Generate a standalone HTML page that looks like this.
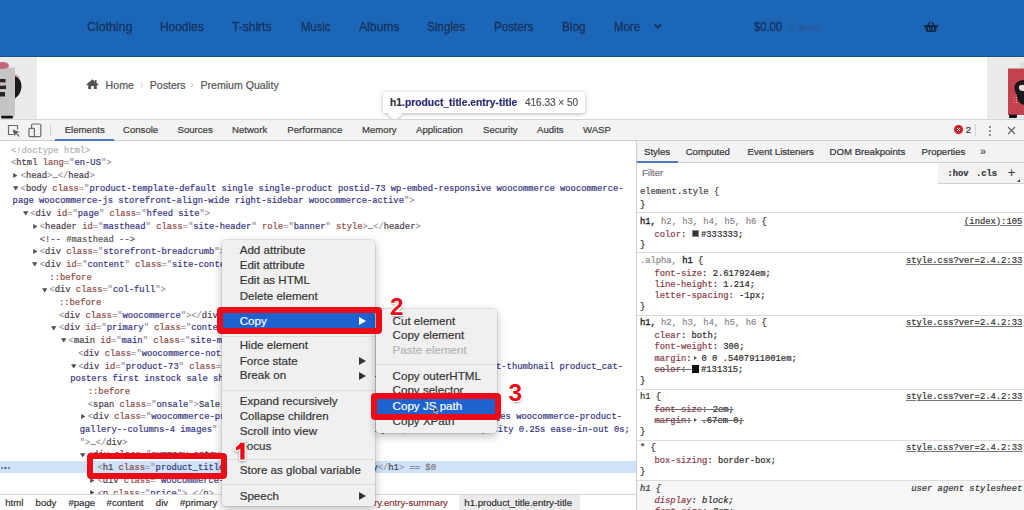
<!DOCTYPE html><html><head><meta charset="utf-8"><style>
*{margin:0;padding:0;box-sizing:border-box}
html,body{width:1024px;height:510px;overflow:hidden;background:#fff;position:relative}
body{font-family:"Liberation Sans",sans-serif}
.abs{position:absolute}
.t{position:absolute;white-space:pre;line-height:1;font-family:"Liberation Mono",monospace;-webkit-text-stroke:0.2px currentColor}
.b{color:#9e96a0}.n{color:#4a3b4c}.a{color:#8e4a44}.v{color:#363680}
.dt{color:#b4b4b4}.tx{color:#303942}.cm{color:#555}
.tri{position:absolute;width:0;height:0}
.tri.r{border-top:2.3px solid transparent;border-bottom:2.3px solid transparent;border-left:4.2px solid #4a4a4a}
.tri.d{border-left:2.5px solid transparent;border-right:2.5px solid transparent;border-top:4.2px solid #4a4a4a}

.pn{color:#8a3b48}.pv{color:#2a2a2a}.sg{color:#8a8a8a}.sd{color:#1a1a1a;-webkit-text-stroke:0.3px #1a1a1a}
.strike{text-decoration:line-through;text-decoration-color:#6a6a6a}
.menu{position:absolute;background:#f0f0f0;border-radius:4px;box-shadow:0 3px 10px rgba(0,0,0,.28),0 0 0 0.5px rgba(0,0,0,.15)}
.sep{position:absolute;height:1px;background:#dcdcdc}
.rbox{position:absolute;border:6px solid #ec0c18;border-radius:4px}
.num{position:absolute;font-family:"Liberation Sans",sans-serif;font-weight:bold;color:#e80c18;line-height:1;
 text-shadow:1px 1px 0 #fff,-1px -1px 0 #fff,1px -1px 0 #fff,-1px 1px 0 #fff,0 1px 0 #fff,0 -1px 0 #fff,1px 0 0 #fff,-1px 0 0 #fff,1px 2px 2px rgba(0,0,0,.35)}
</style></head><body>
<div class="abs" style="left:0;top:0;width:1024px;height:56px;background:#1b66b7"></div><div class="abs" style="left:0;top:56px;width:1024px;height:1px;background:#17508f"></div><div class="t" style="left:86.70px;top:19.99px;font-size:13px;transform:scaleX(0.9497);transform-origin:0 0;font-family:'Liberation Sans', sans-serif;color:#17325c;-webkit-text-stroke:0.35px #17325c;">Clothing</div><div class="t" style="left:160.10px;top:19.99px;font-size:13px;transform:scaleX(0.9162);transform-origin:0 0;font-family:'Liberation Sans', sans-serif;color:#17325c;-webkit-text-stroke:0.35px #17325c;">Hoodies</div><div class="t" style="left:232.40px;top:19.99px;font-size:13px;transform:scaleX(0.9246);transform-origin:0 0;font-family:'Liberation Sans', sans-serif;color:#17325c;-webkit-text-stroke:0.35px #17325c;">T-shirts</div><div class="t" style="left:300.50px;top:19.99px;font-size:13px;transform:scaleX(0.8631);transform-origin:0 0;font-family:'Liberation Sans', sans-serif;color:#17325c;-webkit-text-stroke:0.35px #17325c;">Music</div><div class="t" style="left:358.70px;top:19.99px;font-size:13px;transform:scaleX(0.9296);transform-origin:0 0;font-family:'Liberation Sans', sans-serif;color:#17325c;-webkit-text-stroke:0.35px #17325c;">Albums</div><div class="t" style="left:427.00px;top:19.99px;font-size:13px;transform:scaleX(0.8912);transform-origin:0 0;font-family:'Liberation Sans', sans-serif;color:#17325c;-webkit-text-stroke:0.35px #17325c;">Singles</div><div class="t" style="left:494.00px;top:19.99px;font-size:13px;transform:scaleX(0.8940);transform-origin:0 0;font-family:'Liberation Sans', sans-serif;color:#17325c;-webkit-text-stroke:0.35px #17325c;">Posters</div><div class="t" style="left:562.00px;top:19.99px;font-size:13px;transform:scaleX(0.9031);transform-origin:0 0;font-family:'Liberation Sans', sans-serif;color:#17325c;-webkit-text-stroke:0.35px #17325c;">Blog</div><div class="t" style="left:614.00px;top:19.99px;font-size:13px;transform:scaleX(0.8778);transform-origin:0 0;font-family:'Liberation Sans', sans-serif;color:#17325c;-webkit-text-stroke:0.35px #17325c;">More</div><div class="t" style="left:753.60px;top:19.99px;font-size:13px;transform:scaleX(0.8638);transform-origin:0 0;font-family:'Liberation Sans', sans-serif;color:#17325c;-webkit-text-stroke:0.35px #17325c;">$0.00</div><div class="t" style="left:789.00px;top:22.53px;font-size:10px;font-family:'Liberation Sans', sans-serif;color:#2a5a9a;">0 items</div><svg class="abs" style="left:653px;top:22.5px" width="10" height="6" viewBox="0 0 10 6"><path d="M1.6 1.6 L4.8 4.4 L8 1.6" stroke="#17325c" stroke-width="2" fill="none"/></svg><svg class="abs" style="left:923px;top:21px" width="16" height="12" viewBox="0 0 16 12"><path d="M5 4 L7 0.8 M11 4 L9 0.8" stroke="#12294a" stroke-width="1.4"/><path d="M1 4 H15 V6 H14 L12.5 11 H3.5 L2 6 H1 Z" fill="#12294a"/><path d="M5.5 6.5 V9.5 M8 6.5 V9.5 M10.5 6.5 V9.5" stroke="#1b66b7" stroke-width="1"/></svg><svg class="abs" style="left:0;top:57px" width="37" height="62" viewBox="0 57 37 62"><rect x="0" y="57" width="37" height="62" fill="#ebebeb"/><rect x="0" y="67.5" width="15" height="49" fill="#c6c4c4"/><ellipse cx="2.5" cy="65.5" rx="6.5" ry="3.6" fill="#c36a78"/><path d="M13.5 74.5 Q18 73.5 20 78 L15 79 Z" fill="#d8b4ba"/><path d="M15 76 Q22 79 21.5 87 Q20.5 95 15 98.5 Z" fill="#1c1a1b"/><path d="M0 79 H5.5 V82.5 H0 Z M0 85.5 H6 V89 H0 Z M0 92 H5 V96.5 H0 Z" fill="#262324"/><path d="M0 82.5 H4 V85.5 H0 Z" fill="#d5aeb5"/><rect x="1" y="115.8" width="12" height="2.8" rx="1.4" fill="#141414"/></svg><svg class="abs" style="left:987px;top:57px" width="37" height="62" viewBox="987 57 37 62"><rect x="987" y="57" width="37" height="62" fill="#ebebeb"/><rect x="1008" y="68.5" width="16" height="46.5" fill="#c2434f"/><path d="M1024 80 Q1016 80.5 1014.5 86 Q1014 92 1017 95 Q1017 103 1024 105 Z" fill="#1a1718"/><path d="M1019 86 Q1022 84 1024 85 V91 Q1020 91.5 1019 89 Z" fill="#e9dada"/><path d="M1013.5 97 h1 v1 h-1z M1016 97 h1 v1 h-1z M1013.5 99.5 h1 v1 h-1z M1016 99.5 h1 v1 h-1z M1013.5 102 h1 v1 h-1z M1016 102 h1 v1 h-1z" fill="#f0a0a8"/><rect x="1020" y="62" width="4" height="6" fill="#dcdcdc"/><rect x="1009" y="114.5" width="8" height="3.5" rx="1" fill="#161616"/></svg><svg class="abs" style="left:86px;top:79px" width="13" height="10" viewBox="0 0 13 10"><path d="M6.5 0.3 L0.3 5.6 L1.3 6.5 L2.2 5.8 V10 H5.2 V7 H7.8 V10 H10.8 V5.8 L11.7 6.5 L12.7 5.6 L10.5 3.7 V1 H9 V2.4 Z" fill="#555"/></svg><div class="t" style="left:105.60px;top:79.52px;font-size:10.6px;font-family:'Liberation Sans', sans-serif;color:#555;">Home</div><div class="t" style="left:149.70px;top:79.52px;font-size:10.6px;font-family:'Liberation Sans', sans-serif;color:#555;">Posters</div><div class="t" style="left:200.40px;top:79.52px;font-size:10.6px;font-family:'Liberation Sans', sans-serif;color:#555;">Premium Quality</div><svg class="abs" style="left:139.5px;top:82px" width="4" height="6" viewBox="0 0 4 6"><path d="M0.6 0.5 L3 3 L0.6 5.5" stroke="#c8c8c8" stroke-width="1" fill="none"/></svg><svg class="abs" style="left:190px;top:82px" width="4" height="6" viewBox="0 0 4 6"><path d="M0.6 0.5 L3 3 L0.6 5.5" stroke="#c8c8c8" stroke-width="1" fill="none"/></svg><div class="abs" style="left:383px;top:92px;width:202px;height:21px;background:#fff;border-radius:3px;box-shadow:0 1px 4px rgba(0,0,0,.3)"></div><div class="abs" style="left:390px;top:109px;width:10px;height:10px;background:#fff;transform:rotate(45deg);box-shadow:2px 2px 3px rgba(0,0,0,.15)"></div><div class="abs" style="left:383px;top:100px;width:30px;height:13px;background:#fff"></div><div class="t" style="left:389.60px;top:96.66px;font-size:10.8px;transform:scaleX(0.9563);transform-origin:0 0;font-family:'Liberation Sans', sans-serif;font-weight:bold;"><span style="color:#3b2f40">h1</span><span style="color:#2b2d72">.product_title.entry-title</span></div><div class="t" style="left:525.00px;top:96.66px;font-size:10.8px;transform:scaleX(0.9241);transform-origin:0 0;font-family:'Liberation Sans', sans-serif;color:#555;">416.33 × 50</div><div class="abs" style="left:0;top:119px;width:1024px;height:22px;background:#f3f3f3;border-top:1px solid #d6d6d6;border-bottom:1px solid #cfcfcf"></div><div class="abs" style="left:55px;top:139px;width:59px;height:2px;background:#5177bd"></div><svg class="abs" style="left:7px;top:124px" width="14" height="13" viewBox="0 0 14 13"><path d="M6.5 10.5 H1.5 V1.5 H10.5 V5.5" stroke="#6a6a6a" stroke-width="1.2" fill="none"/><path d="M5.5 5.5 L12.5 8 L9.6 9 L12.6 12 L11.8 12.8 L8.8 9.8 L7.8 12.5 Z" fill="#5a5a5a"/></svg><svg class="abs" style="left:28px;top:123px" width="14" height="15" viewBox="0 0 14 15"><rect x="3.6" y="1" width="9.2" height="12.6" rx="1.2" stroke="#6a6a6a" stroke-width="1.2" fill="none"/><rect x="1" y="5.4" width="5.4" height="8.2" rx="0.8" stroke="#6a6a6a" stroke-width="1.2" fill="#f3f3f3"/></svg><div class="abs" style="left:49.5px;top:124px;width:1px;height:12px;background:#d2d2d2"></div><div class="t" style="left:64.70px;top:125.17px;font-size:9.6px;font-family:'Liberation Sans', sans-serif;color:#3c3c3c;">Elements</div><div class="t" style="left:123.00px;top:125.17px;font-size:9.6px;font-family:'Liberation Sans', sans-serif;color:#3c3c3c;">Console</div><div class="t" style="left:177.50px;top:125.17px;font-size:9.6px;font-family:'Liberation Sans', sans-serif;color:#3c3c3c;">Sources</div><div class="t" style="left:232.00px;top:125.17px;font-size:9.6px;font-family:'Liberation Sans', sans-serif;color:#3c3c3c;">Network</div><div class="t" style="left:287.30px;top:125.17px;font-size:9.6px;font-family:'Liberation Sans', sans-serif;color:#3c3c3c;">Performance</div><div class="t" style="left:362.00px;top:125.17px;font-size:9.6px;font-family:'Liberation Sans', sans-serif;color:#3c3c3c;">Memory</div><div class="t" style="left:416.00px;top:125.17px;font-size:9.6px;font-family:'Liberation Sans', sans-serif;color:#3c3c3c;">Application</div><div class="t" style="left:483.00px;top:125.17px;font-size:9.6px;font-family:'Liberation Sans', sans-serif;color:#3c3c3c;">Security</div><div class="t" style="left:537.00px;top:125.17px;font-size:9.6px;font-family:'Liberation Sans', sans-serif;color:#3c3c3c;">Audits</div><div class="t" style="left:583.00px;top:125.17px;font-size:9.6px;font-family:'Liberation Sans', sans-serif;color:#3c3c3c;">WASP</div><div class="abs" style="left:954.2px;top:125.2px;width:8.6px;height:8.6px;border-radius:50%;background:#d0222c"></div><svg class="abs" style="left:956px;top:127px" width="5" height="5" viewBox="0 0 5 5"><path d="M1 1 L4 4 M4 1 L1 4" stroke="#fff" stroke-width="1"/></svg><div class="t" style="left:965.80px;top:125.17px;font-size:9.6px;font-family:'Liberation Sans', sans-serif;color:#333;">2</div><div class="abs" style="left:974.5px;top:124px;width:1px;height:12px;background:#d2d2d2"></div><div class="abs" style="left:988.5px;top:125.5px;width:2.4px;height:2.4px;border-radius:50%;background:#6a6a6a"></div><div class="abs" style="left:988.5px;top:129.5px;width:2.4px;height:2.4px;border-radius:50%;background:#6a6a6a"></div><div class="abs" style="left:988.5px;top:133.5px;width:2.4px;height:2.4px;border-radius:50%;background:#6a6a6a"></div><svg class="abs" style="left:1007px;top:126px" width="9" height="9" viewBox="0 0 9 9"><path d="M1 1 L8 8 M8 1 L1 8" stroke="#6a6a6a" stroke-width="1.3"/></svg><div class="abs" style="left:0;top:141px;width:636px;height:353px;background:#fff;overflow:hidden" id="ep"><div class="abs" style="left:0;top:320.4px;width:636px;height:11.3px;background:#cfe2f7"></div><div class="abs" style="left:0.7px;top:325.7px;width:2.3px;height:2.3px;border-radius:50%;background:#5a6a82"></div><div class="abs" style="left:4.4px;top:325.7px;width:2.3px;height:2.3px;border-radius:50%;background:#5a6a82"></div><div class="abs" style="left:8.1px;top:325.7px;width:2.3px;height:2.3px;border-radius:50%;background:#5a6a82"></div><div class="t" style="left:11.00px;top:5.64px;font-size:8.82px;"><span class="dt">&lt;!doctype html&gt;</span></div><div class="t" style="left:11.00px;top:18.34px;font-size:8.82px;"><span class="b">&lt;</span><span class="n">html</span> <span class="a">lang</span><span class="b">="</span><span class="v">en-US</span><span class="b">"</span><span class="b">&gt;</span></div><div class="t" style="left:20.60px;top:31.04px;font-size:8.82px;"><span class="b">&lt;</span><span class="n">head</span><span class="b">&gt;</span><span class="tx">…</span><span class="b">&lt;/</span><span class="n">head</span><span class="b">&gt;</span></div><svg class="abs" style="left:13.30px;top:31.80px" width="5" height="5" viewBox="0 0 5 5"><path d="M0.2 0 L4.4 2.5 L0.2 5 Z" fill="#4e4e4e"/></svg><div class="t" style="left:20.60px;top:43.74px;font-size:8.82px;"><span class="b">&lt;</span><span class="n">body</span> <span class="a">class</span><span class="b">="</span><span class="v">product-template-default single single-product postid-73 wp-embed-responsive woocommerce woocommerce-</span></div><svg class="abs" style="left:12.90px;top:44.90px" width="6" height="5" viewBox="0 0 6 5"><path d="M0 0.2 L5.4 0.2 L2.7 4.4 Z" fill="#4e4e4e"/></svg><div class="t" style="left:12.60px;top:56.44px;font-size:8.82px;"><span class="v">page woocommerce-js storefront-align-wide right-sidebar woocommerce-active</span><span class="b">"&gt;</span></div><div class="t" style="left:30.20px;top:69.14px;font-size:8.82px;"><span class="b">&lt;</span><span class="n">div</span> <span class="a">id</span><span class="b">="</span><span class="v">page</span><span class="b">"</span> <span class="a">class</span><span class="b">="</span><span class="v">hfeed site</span><span class="b">"</span><span class="b">&gt;</span></div><svg class="abs" style="left:22.50px;top:70.30px" width="6" height="5" viewBox="0 0 6 5"><path d="M0 0.2 L5.4 0.2 L2.7 4.4 Z" fill="#4e4e4e"/></svg><div class="t" style="left:39.80px;top:81.84px;font-size:8.82px;"><span class="b">&lt;</span><span class="n">header</span> <span class="a">id</span><span class="b">="</span><span class="v">masthead</span><span class="b">"</span> <span class="a">class</span><span class="b">="</span><span class="v">site-header</span><span class="b">"</span> <span class="a">role</span><span class="b">="</span><span class="v">banner</span><span class="b">"</span> <span class="a">style</span><span class="b">&gt;</span><span class="tx">…</span><span class="b">&lt;/</span><span class="n">header</span><span class="b">&gt;</span></div><svg class="abs" style="left:32.50px;top:82.60px" width="5" height="5" viewBox="0 0 5 5"><path d="M0.2 0 L4.4 2.5 L0.2 5 Z" fill="#4e4e4e"/></svg><div class="t" style="left:39.80px;top:94.54px;font-size:8.82px;"><span class="cm">&lt;!-- #masthead --&gt;</span></div><div class="t" style="left:39.80px;top:107.24px;font-size:8.82px;"><span class="b">&lt;</span><span class="n">div</span> <span class="a">class</span><span class="b">="</span><span class="v">storefront-breadcrumb</span><span class="b">"</span><span class="b">&gt;</span><span class="tx">…</span><span class="b">&lt;/</span><span class="n">div</span><span class="b">&gt;</span></div><svg class="abs" style="left:32.50px;top:108.00px" width="5" height="5" viewBox="0 0 5 5"><path d="M0.2 0 L4.4 2.5 L0.2 5 Z" fill="#4e4e4e"/></svg><div class="t" style="left:39.80px;top:119.94px;font-size:8.82px;"><span class="b">&lt;</span><span class="n">div</span> <span class="a">id</span><span class="b">="</span><span class="v">content</span><span class="b">"</span> <span class="a">class</span><span class="b">="</span><span class="v">site-content</span><span class="b">"</span> <span class="a">tabindex</span><span class="b">="</span><span class="v">-1</span><span class="b">"</span><span class="b">&gt;</span></div><svg class="abs" style="left:32.10px;top:121.10px" width="6" height="5" viewBox="0 0 6 5"><path d="M0 0.2 L5.4 0.2 L2.7 4.4 Z" fill="#4e4e4e"/></svg><div class="t" style="left:49.40px;top:132.64px;font-size:8.82px;"><span class="a">::before</span></div><div class="t" style="left:49.40px;top:145.34px;font-size:8.82px;"><span class="b">&lt;</span><span class="n">div</span> <span class="a">class</span><span class="b">="</span><span class="v">col-full</span><span class="b">"</span><span class="b">&gt;</span></div><svg class="abs" style="left:41.70px;top:146.50px" width="6" height="5" viewBox="0 0 6 5"><path d="M0 0.2 L5.4 0.2 L2.7 4.4 Z" fill="#4e4e4e"/></svg><div class="t" style="left:59.00px;top:158.04px;font-size:8.82px;"><span class="a">::before</span></div><div class="t" style="left:59.00px;top:170.74px;font-size:8.82px;"><span class="b">&lt;</span><span class="n">div</span> <span class="a">class</span><span class="b">="</span><span class="v">woocommerce</span><span class="b">"</span><span class="b">&gt;</span><span class="b">&lt;/</span><span class="n">div</span><span class="b">&gt;</span></div><div class="t" style="left:59.00px;top:183.44px;font-size:8.82px;"><span class="b">&lt;</span><span class="n">div</span> <span class="a">id</span><span class="b">="</span><span class="v">primary</span><span class="b">"</span> <span class="a">class</span><span class="b">="</span><span class="v">content-area</span><span class="b">"</span><span class="b">&gt;</span></div><svg class="abs" style="left:51.30px;top:184.60px" width="6" height="5" viewBox="0 0 6 5"><path d="M0 0.2 L5.4 0.2 L2.7 4.4 Z" fill="#4e4e4e"/></svg><div class="t" style="left:68.60px;top:196.14px;font-size:8.82px;"><span class="b">&lt;</span><span class="n">main</span> <span class="a">id</span><span class="b">="</span><span class="v">main</span><span class="b">"</span> <span class="a">class</span><span class="b">="</span><span class="v">site-main</span><span class="b">"</span> <span class="a">role</span><span class="b">="</span><span class="v">main</span><span class="b">"</span><span class="b">&gt;</span></div><svg class="abs" style="left:60.90px;top:197.30px" width="6" height="5" viewBox="0 0 6 5"><path d="M0 0.2 L5.4 0.2 L2.7 4.4 Z" fill="#4e4e4e"/></svg><div class="t" style="left:78.20px;top:208.84px;font-size:8.82px;"><span class="b">&lt;</span><span class="n">div</span> <span class="a">class</span><span class="b">="</span><span class="v">woocommerce-notices-wrapper</span><span class="b">"</span><span class="b">&gt;</span><span class="b">&lt;/</span><span class="n">div</span><span class="b">&gt;</span></div><div class="t" style="left:78.20px;top:221.54px;font-size:8.82px;"><span class="b">&lt;</span><span class="n">div</span> <span class="a">id</span><span class="b">="</span><span class="v">product-73</span><span class="b">"</span> <span class="a">class</span><span class="b">="</span><span class="v">product type-product post-73 status-publish has-post-thumbnail product_cat-</span></div><svg class="abs" style="left:70.50px;top:222.70px" width="6" height="5" viewBox="0 0 6 5"><path d="M0 0.2 L5.4 0.2 L2.7 4.4 Z" fill="#4e4e4e"/></svg><div class="t" style="left:70.20px;top:234.24px;font-size:8.82px;"><span class="v">posters first instock sale shipping-taxable purchasable product-type-simple</span><span class="b">"&gt;</span></div><div class="t" style="left:87.80px;top:246.94px;font-size:8.82px;"><span class="a">::before</span></div><div class="t" style="left:87.80px;top:259.64px;font-size:8.82px;"><span class="b">&lt;</span><span class="n">span</span> <span class="a">class</span><span class="b">="</span><span class="v">onsale</span><span class="b">"</span><span class="b">&gt;</span><span class="tx">Sale!</span><span class="b">&lt;/</span><span class="n">span</span><span class="b">&gt;</span></div><div class="t" style="left:87.80px;top:272.34px;font-size:8.82px;"><span class="b">&lt;</span><span class="n">div</span> <span class="a">class</span><span class="b">="</span><span class="v">woocommerce-product-gallery woocommerce-product-gallery--with-images woocommerce-product-</span></div><svg class="abs" style="left:80.50px;top:273.10px" width="5" height="5" viewBox="0 0 5 5"><path d="M0.2 0 L4.4 2.5 L0.2 5 Z" fill="#4e4e4e"/></svg><div class="t" style="left:79.80px;top:285.04px;font-size:8.82px;"><span class="v">gallery--columns-4 images</span><span class="b">"</span> <span class="a">data-columns</span><span class="b">="</span><span class="v">4</span><span class="b">"</span> <span class="a">style</span><span class="b">="</span><span class="v">opacity: 1; transition: opacity 0.25s ease-in-out 0s;</span></div><div class="t" style="left:79.80px;top:297.74px;font-size:8.82px;"><span class="b">"&gt;</span><span class="tx">…</span><span class="b">&lt;/</span><span class="n">div</span><span class="b">&gt;</span></div><div class="t" style="left:87.80px;top:310.44px;font-size:8.82px;"><span class="b">&lt;</span><span class="n">div</span> <span class="a">class</span><span class="b">="</span><span class="v">summary entry-summary</span><span class="b">"</span><span class="b">&gt;</span></div><svg class="abs" style="left:80.10px;top:311.60px" width="6" height="5" viewBox="0 0 6 5"><path d="M0 0.2 L5.4 0.2 L2.7 4.4 Z" fill="#4e4e4e"/></svg><div class="t" style="left:97.40px;top:323.14px;font-size:8.82px;"><span class="b">&lt;</span><span class="n">h1</span> <span class="a">class</span><span class="b">="</span><span class="v">product_title entry-title</span><span class="b">"</span><span class="b">&gt;</span><span class="tx">Premium Quality</span><span class="b">&lt;/</span><span class="n">h1</span><span class="b">&gt;</span><span class="tx" style="color:#777"> == $0</span></div><div class="t" style="left:97.40px;top:335.84px;font-size:8.82px;"><span class="b">&lt;</span><span class="n">div</span> <span class="a">class</span><span class="b">="</span><span class="v">woocommerce-product-rating</span><span class="b">"</span><span class="b">&gt;</span><span class="tx">…</span><span class="b">&lt;/</span><span class="n">div</span><span class="b">&gt;</span></div><svg class="abs" style="left:90.10px;top:336.60px" width="5" height="5" viewBox="0 0 5 5"><path d="M0.2 0 L4.4 2.5 L0.2 5 Z" fill="#4e4e4e"/></svg><div class="t" style="left:97.40px;top:348.54px;font-size:8.82px;"><span class="b">&lt;</span><span class="n">p</span> <span class="a">class</span><span class="b">="</span><span class="v">price</span><span class="b">"</span><span class="b">&gt;</span><span class="tx">…</span><span class="b">&lt;/</span><span class="n">p</span><span class="b">&gt;</span></div><svg class="abs" style="left:90.10px;top:349.30px" width="5" height="5" viewBox="0 0 5 5"><path d="M0.2 0 L4.4 2.5 L0.2 5 Z" fill="#4e4e4e"/></svg></div><div class="abs" style="left:0;top:494px;width:636px;height:16px;background:#fff;border-top:1px solid #d8d8d8"></div><div class="abs" style="left:458.7px;top:495px;width:121.3px;height:15px;background:#ebebeb"></div><div class="t" style="left:5.20px;top:498.47px;font-size:9.6px;font-family:'Liberation Sans', sans-serif;color:#333;">html</div><div class="t" style="left:35.60px;top:498.47px;font-size:9.6px;font-family:'Liberation Sans', sans-serif;color:#333;">body</div><div class="t" style="left:68.40px;top:498.47px;font-size:9.6px;font-family:'Liberation Sans', sans-serif;color:#333;">#page</div><div class="t" style="left:106.60px;top:498.47px;font-size:9.6px;font-family:'Liberation Sans', sans-serif;color:#333;">#content</div><div class="t" style="left:155.80px;top:498.47px;font-size:9.6px;font-family:'Liberation Sans', sans-serif;color:#333;">div</div><div class="t" style="left:180.00px;top:498.47px;font-size:9.6px;font-family:'Liberation Sans', sans-serif;color:#333;">#primary</div><div class="t" style="left:374.00px;top:498.47px;font-size:9.6px;font-family:'Liberation Sans', sans-serif;color:#8b3a3a;">ry.entry-summary</div><div class="t" style="left:464.30px;top:498.47px;font-size:9.6px;font-family:'Liberation Sans', sans-serif;color:#333;">h1.product_title.entry-title</div><div class="abs" style="left:636px;top:141px;width:388px;height:369px;background:#fff;border-left:1px solid #cdcdcd"></div><div class="abs" style="left:637px;top:141px;width:387px;height:21.5px;background:#f3f3f3;border-bottom:1px solid #cfcfcf"></div><div class="abs" style="left:637px;top:160.5px;width:41px;height:2px;background:#5177bd"></div><div class="t" style="left:644.00px;top:147.37px;font-size:9.6px;font-family:'Liberation Sans', sans-serif;color:#333;">Styles</div><div class="t" style="left:685.70px;top:147.37px;font-size:9.6px;font-family:'Liberation Sans', sans-serif;color:#333;">Computed</div><div class="t" style="left:747.60px;top:147.37px;font-size:9.6px;font-family:'Liberation Sans', sans-serif;color:#333;">Event Listeners</div><div class="t" style="left:829.60px;top:147.37px;font-size:9.6px;font-family:'Liberation Sans', sans-serif;color:#333;">DOM Breakpoints</div><div class="t" style="left:921.60px;top:147.37px;font-size:9.6px;font-family:'Liberation Sans', sans-serif;color:#333;">Properties</div><div class="t" style="left:980.00px;top:146.19px;font-size:11px;font-family:'Liberation Sans', sans-serif;color:#555;">»</div><div class="abs" style="left:637px;top:162.5px;width:387px;height:21.5px;background:#f3f3f3;border-bottom:1px solid #d2d2d2"></div><div class="abs" style="left:637px;top:163px;width:301px;height:20.5px;background:#fff"></div><div class="t" style="left:642.00px;top:168.07px;font-size:9.6px;font-family:'Liberation Sans', sans-serif;color:#777;">Filter</div><div class="t" style="left:947.50px;top:170.46px;font-size:8.8px;color:#333;font-weight:bold;">:hov</div><div class="t" style="left:976.00px;top:170.46px;font-size:8.8px;color:#333;font-weight:bold;">.cls</div><div class="t" style="left:1007.80px;top:166.49px;font-size:13px;font-family:'Liberation Sans', sans-serif;color:#444;">+</div><div class="abs" style="left:1017px;top:179px;width:0;height:0;border-left:3px solid transparent;border-bottom:3px solid #444"></div><div class="abs" style="left:637px;top:480.4px;width:387px;height:30px;background:#f7f7f7"></div><div class="abs" style="left:637px;top:212.3px;width:387px;height:1px;background:#dddddd"></div><div class="abs" style="left:637px;top:252.3px;width:387px;height:1px;background:#dddddd"></div><div class="abs" style="left:637px;top:314.9px;width:387px;height:1px;background:#dddddd"></div><div class="abs" style="left:637px;top:388.7px;width:387px;height:1px;background:#dddddd"></div><div class="abs" style="left:637px;top:440.2px;width:387px;height:1px;background:#dddddd"></div><div class="abs" style="left:637px;top:479.9px;width:387px;height:1px;background:#dddddd"></div><div class="t" style="left:639.90px;top:188.24px;font-size:8.82px;"><span style="color:#444">element.style {</span></div><div class="t" style="left:639.90px;top:200.54px;font-size:8.82px;"><span style="color:#333">}</span></div><div class="t" style="left:639.90px;top:217.54px;font-size:8.82px;"><span class="sd">h1,</span><span class="sg"> h2, h3, h4, h5, h6</span><span style="color:#333"> {</span></div><div class="t" style="left:964.09px;top:217.54px;font-size:8.82px;color:#333;text-decoration:underline;text-decoration-color:#777;">(index):105</div><div class="t" style="left:654.50px;top:229.84px;font-size:8.82px;"><span class="pn">color</span><span class="pv">: </span><span style="display:inline-block;width:7.5px;height:7.5px;background:#333;border:0.5px solid #888;vertical-align:-0.5px;margin-right:2px"></span><span class="pv">#333333;</span></div><div class="t" style="left:639.90px;top:240.64px;font-size:8.82px;"><span style="color:#333">}</span></div><div class="t" style="left:639.90px;top:256.94px;font-size:8.82px;"><span class="sg">.alpha, </span><span class="sd">h1</span><span style="color:#333"> {</span></div><div class="t" style="left:905.89px;top:256.94px;font-size:8.82px;color:#333;text-decoration:underline;text-decoration-color:#777;">style.css?ver=2.4.2:33</div><div class="t" style="left:654.50px;top:269.64px;font-size:8.82px;"><span class="pn">font-size</span><span class="pv">: 2.617924em;</span></div><div class="t" style="left:654.50px;top:280.94px;font-size:8.82px;"><span class="pn">line-height</span><span class="pv">: 1.214;</span></div><div class="t" style="left:654.50px;top:292.14px;font-size:8.82px;"><span class="pn">letter-spacing</span><span class="pv">: -1px;</span></div><div class="t" style="left:639.90px;top:302.84px;font-size:8.82px;"><span style="color:#333">}</span></div><div class="t" style="left:639.90px;top:319.44px;font-size:8.82px;"><span class="sd">h1,</span><span class="sg"> h2, h3, h4, h5, h6</span><span style="color:#333"> {</span></div><div class="t" style="left:905.89px;top:319.44px;font-size:8.82px;color:#333;text-decoration:underline;text-decoration-color:#777;">style.css?ver=2.4.2:33</div><div class="t" style="left:654.50px;top:331.74px;font-size:8.82px;"><span class="pn">clear</span><span class="pv">: both;</span></div><div class="t" style="left:654.50px;top:342.84px;font-size:8.82px;"><span class="pn">font-weight</span><span class="pv">: 300;</span></div><div class="t" style="left:654.50px;top:354.54px;font-size:8.82px;"><span class="pn">margin</span><span class="pv">:<span style="display:inline-block;width:0;height:0;border-top:2.3px solid transparent;border-bottom:2.3px solid transparent;border-left:3.8px solid #555;vertical-align:1px;margin-left:2px;margin-right:5px"></span>0 0 .5407911001em;</span></div><div class="t" style="left:654.50px;top:365.49px;font-size:8.82px;"><span class="strike"><span class="pn">color</span><span class="pv">: </span><span style="display:inline-block;width:7.5px;height:7.5px;background:#131315;vertical-align:-0.5px;margin-right:2px"></span></span><span class="pv">#131315;</span></div><div class="t" style="left:639.90px;top:376.64px;font-size:8.82px;"><span style="color:#333">}</span></div><div class="t" style="left:639.90px;top:393.24px;font-size:8.82px;"><span style="color:#333">h1 {</span></div><div class="t" style="left:905.89px;top:393.24px;font-size:8.82px;color:#333;text-decoration:underline;text-decoration-color:#777;">style.css?ver=2.4.2:33</div><div class="t" style="left:654.50px;top:405.64px;font-size:8.82px;"><span class="strike"><span class="pn">font-size</span><span class="pv">: 2em;</span></span></div><div class="t" style="left:654.50px;top:416.74px;font-size:8.82px;"><span class="strike"><span class="pn">margin</span><span class="pv">:<span style="display:inline-block;width:0;height:0;border-top:2.3px solid transparent;border-bottom:2.3px solid transparent;border-left:3.8px solid #555;vertical-align:1px;margin-left:2px;margin-right:5px"></span>.67em 0;</span></span></div><div class="t" style="left:639.90px;top:427.64px;font-size:8.82px;"><span style="color:#333">}</span></div><div class="t" style="left:639.90px;top:444.24px;font-size:8.82px;"><span style="color:#333">* {</span></div><div class="t" style="left:905.89px;top:444.24px;font-size:8.82px;color:#333;text-decoration:underline;text-decoration-color:#777;">style.css?ver=2.4.2:33</div><div class="t" style="left:654.50px;top:457.24px;font-size:8.82px;"><span class="pn">box-sizing</span><span class="pv">: border-box;</span></div><div class="t" style="left:639.90px;top:467.84px;font-size:8.82px;"><span style="color:#333">}</span></div><div class="t" style="left:639.90px;top:484.64px;font-size:8.82px;font-style:italic;"><span style="color:#333">h1 {</span></div><div class="t" style="left:911.18px;top:484.64px;font-size:8.82px;color:#333;font-style:italic;">user agent stylesheet</div><div class="t" style="left:654.50px;top:497.14px;font-size:8.82px;font-style:italic;"><span class="pn">display</span><span class="pv">: block;</span></div><div class="t" style="left:654.50px;top:508.44px;font-size:8.82px;font-style:italic;"><span class="pn">font-size</span><span class="pv">: 2em;</span></div><div class="menu" style="left:222px;top:240px;width:153px;height:266px"></div><div class="t" style="left:239.70px;top:243.93px;font-size:11.6px;font-family:'Liberation Sans', sans-serif;color:#353535;">Add attribute</div><div class="t" style="left:239.70px;top:259.08px;font-size:11.6px;font-family:'Liberation Sans', sans-serif;color:#353535;">Edit attribute</div><div class="t" style="left:239.70px;top:274.38px;font-size:11.6px;font-family:'Liberation Sans', sans-serif;color:#353535;">Edit as HTML</div><div class="t" style="left:239.70px;top:289.58px;font-size:11.6px;font-family:'Liberation Sans', sans-serif;color:#353535;">Delete element</div><div class="sep" style="left:222px;top:309px;width:153px"></div><div class="abs" style="left:222px;top:313px;width:153px;height:15px;background:#1e62d0"></div><div class="t" style="left:239.70px;top:315.08px;font-size:11.6px;font-family:'Liberation Sans', sans-serif;color:#fff;">Copy</div><div class="abs" style="left:358.5px;top:316.8px;width:0;height:0;border-top:4px solid transparent;border-bottom:4px solid transparent;border-left:7px solid #fff"></div><div class="sep" style="left:222px;top:336px;width:153px"></div><div class="t" style="left:239.70px;top:338.98px;font-size:11.6px;font-family:'Liberation Sans', sans-serif;color:#353535;">Hide element</div><div class="t" style="left:239.70px;top:354.68px;font-size:11.6px;font-family:'Liberation Sans', sans-serif;color:#353535;">Force state</div><div class="t" style="left:239.70px;top:369.38px;font-size:11.6px;font-family:'Liberation Sans', sans-serif;color:#353535;">Break on</div><div class="abs" style="left:358.5px;top:356.5px;width:0;height:0;border-top:4px solid transparent;border-bottom:4px solid transparent;border-left:7px solid #333"></div><div class="abs" style="left:358.5px;top:371.5px;width:0;height:0;border-top:4px solid transparent;border-bottom:4px solid transparent;border-left:7px solid #333"></div><div class="sep" style="left:222px;top:389.5px;width:153px"></div><div class="t" style="left:239.70px;top:394.88px;font-size:11.6px;font-family:'Liberation Sans', sans-serif;color:#353535;">Expand recursively</div><div class="t" style="left:239.70px;top:409.68px;font-size:11.6px;font-family:'Liberation Sans', sans-serif;color:#353535;">Collapse children</div><div class="t" style="left:239.70px;top:424.98px;font-size:11.6px;font-family:'Liberation Sans', sans-serif;color:#353535;">Scroll into view</div><div class="t" style="left:239.70px;top:440.28px;font-size:11.6px;font-family:'Liberation Sans', sans-serif;color:#353535;">Focus</div><div class="sep" style="left:222px;top:459px;width:153px"></div><div class="t" style="left:239.70px;top:464.48px;font-size:11.6px;font-family:'Liberation Sans', sans-serif;color:#353535;">Store as global variable</div><div class="sep" style="left:222px;top:484px;width:153px"></div><div class="t" style="left:239.70px;top:489.98px;font-size:11.6px;font-family:'Liberation Sans', sans-serif;color:#353535;">Speech</div><div class="abs" style="left:358.5px;top:491.8px;width:0;height:0;border-top:4px solid transparent;border-bottom:4px solid transparent;border-left:7px solid #333"></div><div class="menu" style="left:376px;top:309px;width:121px;height:124px"></div><div class="t" style="left:392.60px;top:314.88px;font-size:11.6px;font-family:'Liberation Sans', sans-serif;color:#353535;">Cut element</div><div class="t" style="left:392.60px;top:329.28px;font-size:11.6px;font-family:'Liberation Sans', sans-serif;color:#353535;">Copy element</div><div class="t" style="left:392.60px;top:344.38px;font-size:11.6px;font-family:'Liberation Sans', sans-serif;color:#b4b4b4;">Paste element</div><div class="sep" style="left:376px;top:363.8px;width:121px"></div><div class="t" style="left:392.60px;top:369.78px;font-size:11.6px;font-family:'Liberation Sans', sans-serif;color:#353535;">Copy outerHTML</div><div class="t" style="left:392.60px;top:384.08px;font-size:11.6px;font-family:'Liberation Sans', sans-serif;color:#353535;">Copy selector</div><div class="abs" style="left:376px;top:398.3px;width:121px;height:16.4px;background:#1e62d0"></div><div class="t" style="left:392.60px;top:399.98px;font-size:11.6px;font-family:'Liberation Sans', sans-serif;color:#fff;">Copy JS path</div><div class="t" style="left:392.60px;top:415.08px;font-size:11.6px;font-family:'Liberation Sans', sans-serif;color:#353535;">Copy XPath</div><svg class="abs" style="left:433px;top:406px" width="7" height="9" viewBox="0 0 7 9"><path d="M1 0.8 L1 7 L2.6 5.6 L3.7 8 L4.7 7.5 L3.6 5.2 L5.6 5.2 Z" fill="#222" stroke="#fff" stroke-width="0.6"/></svg><div class="rbox" style="left:87px;top:452.7px;width:140.3px;height:26.3px"></div><div class="rbox" style="left:216.6px;top:306.7px;width:165.4px;height:27.4px"></div><div class="rbox" style="left:371.4px;top:392.8px;width:129.8px;height:27.4px"></div><svg class="abs" style="left:230px;top:436px;overflow:visible" width="20" height="28" viewBox="0 0 20 28"><path d="M10.2 6.7 H14.6 V23.6 H10.3 V12.6 Q8.2 14.1 5.9 14.5 V10.9 Q9 9.9 10.2 6.7 Z" fill="#e80c18" stroke="#fff" stroke-width="2.6" stroke-linejoin="round" paint-order="stroke" style="filter:drop-shadow(0.8px 1.2px 1px rgba(0,0,0,.35))"/></svg><div class="num" style="left:390.0px;top:294.8px;font-size:24.3px">2</div><div class="num" style="left:508.4px;top:381.0px;font-size:24.3px">3</div></body></html>
